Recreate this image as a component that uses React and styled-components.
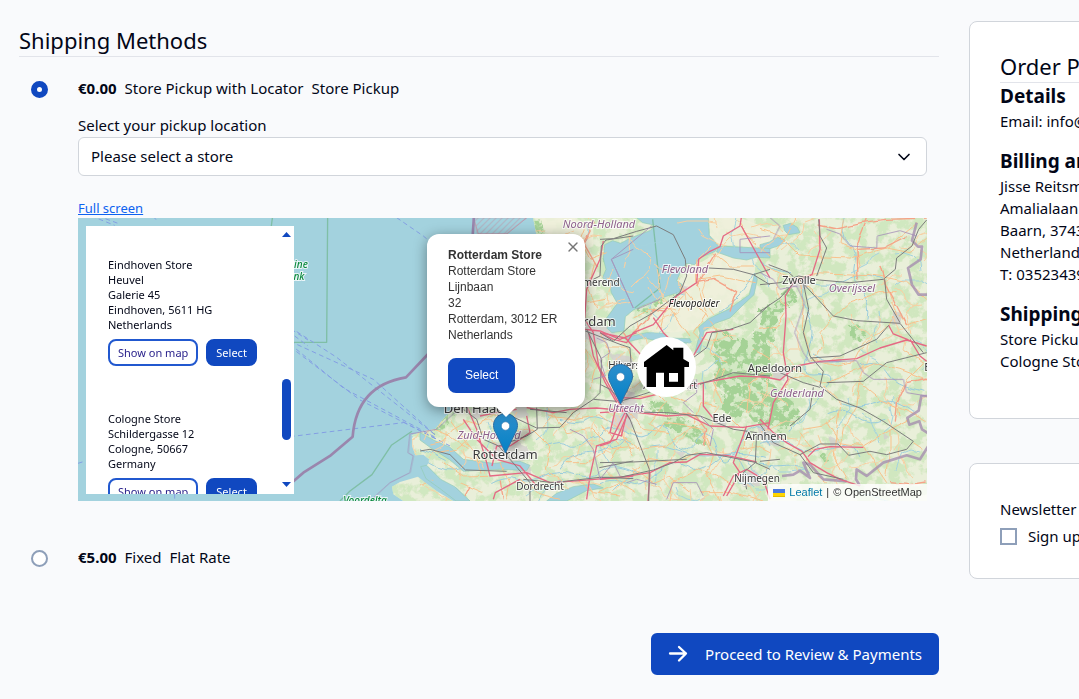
import React from 'react';
import styled, { createGlobalStyle, css } from 'styled-components';
import { ChevronDown, X } from 'lucide-react';

const GlobalStyle = createGlobalStyle`
  *, *::before, *::after {
    box-sizing: border-box;
  }

  body {
    margin: 0;
    background: #f9fafc;
    color: #020617;
    font: 15px/23px 'Noto Sans', sans-serif;
  }

  h1, h2, h3, p {
    margin: 0;
  }

  button, select {
    font: inherit;
  }
`;

const Viewport = styled.div`
  overflow: hidden;
`;

const Page = styled.div`
  display: grid;
  grid-template-columns: 2fr 1fr;
  align-items: start;
  gap: 30px;
  min-width: 1448px;
  padding: 21px 19px 24px;
`;

const Main = styled.main`
  padding-top: 5px;
`;

const SectionTitle = styled.h2`
  padding-bottom: 2px;
  border-bottom: 1px solid #e2e4ea;
  font-size: 22px;
  font-weight: 400;
  line-height: 28px;
`;

const Method = styled.div`
  display: grid;
  grid-template-columns: 17px minmax(0, 1fr);
  column-gap: 30px;
  padding: 0 12px;
  margin-top: ${({ $gap }) => $gap}px;
`;

const Radio = styled.input.attrs({ type: 'radio', name: 'shipping' })`
  appearance: none;
  width: 17px;
  height: 17px;
  margin: 4px 0 0;
  border: 2px solid #8e9fb9;
  border-radius: 50%;
  background: #fff;

  &:checked {
    border: 6px solid #1048c0;
  }
`;

const MethodLabel = styled.label`
  display: flex;
  gap: 8px;
`;

const FieldLabel = styled.label`
  display: block;
  margin-top: 14px;
`;

const SelectWrap = styled.div`
  display: grid;
  align-items: center;

  > * {
    grid-area: 1 / 1;
  }

  svg {
    justify-self: end;
    margin-right: 13px;
    pointer-events: none;
  }
`;

const StoreSelect = styled.select`
  appearance: none;
  width: 100%;
  height: 39px;
  padding: 0 12px;
  border: 1px solid #d1d5db;
  border-radius: 6px;
  background: #fff;
  color: #020617;
`;

const FullScreen = styled.a`
  display: block;
  width: fit-content;
  margin-top: 22px;
  color: #0d62f0;
  font-size: 13px;
  line-height: 20px;
`;

const MapBox = styled.div`
  position: relative;
  height: 283px;
  overflow: hidden;
  background: #a3d2de;
`;

const MapArt = styled.svg`
  display: block;
  width: 100%;
  height: 100%;
`;

const StoreList = styled.div`
  position: absolute;
  top: 8px;
  left: 8px;
  display: flex;
  justify-content: space-between;
  width: 208px;
  height: 268px;
  padding: 0 3px 0 22px;
  overflow: hidden;
  background: #fff;
  font-size: 11px;
  line-height: 15px;
`;

const Stores = styled.div`
  display: grid;
  align-content: start;
  gap: 45px;
  padding-top: 31px;
`;

const StoreActions = styled.div`
  display: flex;
  gap: 8px;
  margin-top: 7px;
`;

const Button = styled.button`
  border: 2px solid #1048c0;
  border-radius: 8px;
  background: #1048c0;
  color: #fff;
  padding: 0 8px;

  ${({ $kind }) => $kind === 'outline' && css`
    border-color: #2158cf;
    background: #fff;
    color: #241c88;
  `}

  ${({ $size }) => $size === 'small' && css`
    height: 27px;
  `}

  ${({ $size }) => $size === 'medium' && css`
    height: 35px;
    margin-top: 15px;
    padding: 0 15px 2px;
  `}

  ${({ $size }) => $size === 'large' && css`
    display: flex;
    align-items: center;
    gap: 17px;
    height: 42px;
    margin: 64px 0 0 auto;
    padding: 0 15px;
    border-radius: 6px;
  `}
`;

const Scroller = styled.div`
  display: flex;
  flex-direction: column;
  align-items: center;
  width: 9px;
  padding: 6px 0;
`;

const ScrollThumb = styled.div`
  width: 9px;
  height: 61px;
  margin: 142px 0 42px;
  border-radius: 5px;
  background: #1048c0;
`;

const Pin = styled.svg`
  position: absolute;
  left: ${({ $x }) => $x}px;
  top: ${({ $y }) => $y}px;
  width: 54px;
  height: 41px;
`;

const HomePin = styled.div`
  position: absolute;
  left: 559px;
  top: 119px;
  width: 59px;
  height: 60px;
  border-radius: 50%;
  background: #fff;
`;

const Popup = styled.div`
  position: absolute;
  left: 349px;
  top: 16px;
  width: 158px;
  padding: 13px 21px 14px;
  border-radius: 12px;
  background: #fff;
  color: #333;
  box-shadow: 0 3px 14px rgba(0, 0, 0, 0.4);
  font: 12px/16px 'Liberation Sans', Arial, sans-serif;
  white-space: nowrap;

  &::after {
    content: '';
    position: absolute;
    top: 100%;
    left: 69px;
    border: 10px solid transparent;
    border-top-color: #fff;
    border-bottom: 0;
  }
`;

const PopupClose = styled.button`
  position: absolute;
  top: 4px;
  right: 4px;
  display: grid;
  place-items: center;
  width: 16px;
  height: 18px;
  padding: 0;
  border: 0;
  background: none;
  color: #757575;
`;

const Attribution = styled.div`
  position: absolute;
  right: 0;
  bottom: 0;
  display: flex;
  align-items: center;
  gap: 4px;
  height: 17px;
  padding: 0 5px;
  background: rgba(255, 255, 255, 0.8);
  color: #333;
  font: 11px/17px 'Liberation Sans', Arial, sans-serif;

  a {
    color: #0078a8;
    text-decoration: none;
  }
`;

const Card = styled.section`
  padding: 30px;
  border: 1px solid #d1d5db;
  border-radius: 8px;
  background: #fff;

  & + & {
    margin-top: 44px;
  }
`;

const Block = styled.div`
  margin-bottom: 16px;
  line-height: 22px;
`;

const BlockTitle = styled.h3`
  font-size: 19px;
  font-weight: 700;
  line-height: 27px;
`;

const NewsletterTitle = styled.h3`
  padding: 4px 0;
  font-size: 15px;
  font-weight: 400;
`;

const CheckLabel = styled.label`
  display: flex;
  align-items: center;
  gap: 11px;
`;

const Checkbox = styled.input.attrs({ type: 'checkbox' })`
  appearance: none;
  width: 17px;
  height: 17px;
  margin: 0;
  border: 2px solid #8e9fb9;
  background: #fff;
`;

// Geometry is kept in tiles at three units per pixel; x is the left edge of a tile.
const tile = (x) => `translate(${x - 78} -2) scale(0.3333)`;

const LAND = [
  [420, 'M338 0 L350 60 L330 200 L250 400 L150 540 L110 575 L78 600 L45 640 L10 645 L-25 658 L-10 675 L30 690 L50 710 L25 735 L60 780 L110 810 L150 850 L200 865 L1600 865 L1600 0z'],
  [290, 'M366 665 L378 656 L400 664 L440 680 L500 704 L560 735 L660 740 L660 855 L640 855 L590 850 L540 825 L490 800 L440 770 L430 740 L400 716 L376 718 L366 690z'],
  [290, 'M405 755 L430 722 L460 714 L520 745 L570 790 L620 855 L540 855 L500 815 L470 805 L420 792z'],
  [290, 'M306 812 L330 798 L384 782 L400 796 L440 825 L490 855 L340 855 L310 835z'],
];

const WATER = [
  [600, 'M110 5 L325 5 L328 58 L354 88 L346 106 L300 125 L284 146 L258 142 L240 170 L230 195 L246 205 L238 228 L190 244 L130 268 L100 282 L76 302 L72 345 L36 350 L20 336 L42 322 L20 306 L52 262 L34 230 L30 210 L8 184 L18 160 L10 128 L14 86 L38 74 L62 82 L92 66 L150 44 L166 28 L128 20z'],
  [600, 'M356 90 L510 98 L510 126 L468 124 L440 132 L400 126 L350 108z'],
  [760, 'M0 86 L28 78 L52 64 L76 72 L60 88 L30 98 L0 94z'],
  [760, 'M70 28 L92 22 L112 34 L120 50 L86 56 L74 44z'],
  [600, 'M464 172 L472 190 L462 236 L424 272 L390 306 L346 322 L312 346 L300 408 L284 412 L300 352 L296 334 L326 308 L386 280 L448 236z'],
  [600, 'M70 366 L140 350 L190 352 L206 366 L270 368 L272 380 L200 380 L130 366 L90 376z'],
  [420, 'M0 650 L40 672 L90 694 L130 730 L220 742 L300 736 L330 748 L320 764 L240 760 L130 766 L90 732 L30 694 L0 672z'],
  [420, 'M380 855 L410 832 L460 812 L520 804 L550 816 L500 824 L440 855z'],
  [420, 'M2 752 L20 748 L62 790 L104 812 L150 855 L108 855 L60 818 L18 788z'],
];

const FARM = [
  [600, 'M328 5 L420 5 L510 40 L510 92 L360 88 L330 56z'],
  [600, 'M284 150 L350 112 L468 132 L462 190 L446 230 L384 274 L320 306 L280 342 L210 350 L130 340 L160 270 L236 232 L256 200 L264 160z'],
  [420, 'M340 5 L460 5 L520 30 L520 90 L460 120 L390 60z'],
];

const FOREST = [
  [600, 'M340 350 L386 346 L400 372 L436 372 L470 340 L510 318 L510 480 L482 510 L510 560 L510 622 L456 612 L440 590 L388 598 L350 572 L376 530 L340 504 L356 458 L332 428 L346 390z'],
  [760, 'M0 286 L40 262 L92 212 L108 236 L96 266 L70 276 L52 296 L40 330 L44 370 L22 392 L30 440 L0 446z'],
  [760, 'M0 490 L40 504 L70 536 L104 560 L120 590 L110 622 L70 642 L40 640 L0 632z'],
  [600, 'M190 612 L236 596 L284 628 L306 646 L314 680 L286 680 L244 652 L204 642z'],
  [600, 'M140 560 L180 556 L222 572 L224 588 L186 586 L148 582z'],
  [600, 'M120 262 L236 232 L240 244 L180 262 L144 292 L110 290z'],
  [760, 'M270 330 L310 332 L322 352 L304 378 L274 370z M176 718 L202 714 L210 730 L188 738z'],
  [420, 'M342 14 L352 56 L332 140 L366 60 L360 10z M556 78 L574 72 L570 120 L552 148z'],
  [420, 'M84 590 L102 580 L74 640 L20 646z'],
];

const URBAN = [
  [420, 'M150 576 L176 574 L190 602 L160 612z M214 680 L276 672 L320 690 L330 720 L290 742 L220 728z M270 742 L330 752 L338 776 L300 780z M490 325 L560 330 L590 360 L540 380 L500 372z M590 520 L650 530 L650 606 L606 604z M566 415 L630 420 L650 450 L600 464z M256 560 L320 566 L330 600 L290 604z'],
  [600, 'M40 596 L88 600 L96 634 L60 650 L36 628z M230 205 L262 212 L256 236 L236 228z M250 484 L290 490 L296 520 L262 524z M340 596 L378 606 L376 632 L346 628z M470 630 L510 634 L510 670 L480 664z M410 780 L470 760 L480 810 L430 812z M220 705 L262 712 L244 726z'],
  [760, 'M100 180 L150 184 L140 220 L96 212z M40 455 L80 462 L76 496 L44 484z M396 284 L426 296 L420 330 L396 326z M370 648 L384 662 L372 672z M206 660 L240 676 L228 698 L208 690z M0 636 L44 650 L60 690 L14 684z'],
];

const STREAMS = [
  [420, 'M214 800 q40 -24 80 -10 t80 -8 t90 -6 t80 -12 t110 8 M380 690 q40 -20 60 -2 t60 -14 t60 4 t60 -16 M420 760 q30 -50 80 -50 t70 -30 t60 0 M20 736 q60 40 110 20 M0 700 q40 10 80 34 M420 610 q60 20 80 0 t80 10 M350 860 q30 -60 80 -70'],
  [600, 'M0 660 q30 -40 80 -10 t80 -8 t60 26 t70 8 t60 28 t70 -20 t90 6 M0 800 q40 -20 80 0 t90 -30 t90 -20 t90 -16 t80 20 t80 -10 M128 700 q50 -20 100 0 t80 20 t80 -6 t110 10 M460 172 q-24 70 -100 120'],
  [760, 'M148 200 q60 20 110 -10 t110 0 M128 206 q0 60 20 100 t-8 110 t40 60 t-20 90 t-70 80 M0 682 q60 -20 110 10 t80 0 M0 744 q40 10 80 4 t70 20 M170 690 q30 20 70 0 t60 30 M254 0 q-20 50 10 80 t20 60 t20 80 t20 90 M206 590 q40 -20 80 10 t90 10 M240 560 q60 20 110 0 t110 30 M300 446 q60 -20 80 20 t110 60 M0 140 q60 30 90 30 M156 414 q60 40 100 16'],
];

const SECONDARY = [
  [420, 'M34 690 L70 680 L96 640 L140 614 L180 626 L220 596 L270 610 M46 710 L110 700 L160 660 L190 650 L230 690 M30 636 L90 660 L150 700 M90 610 L126 660 L170 716 L180 770 M240 740 L270 800 L260 850 M300 790 L350 830 L420 850 M340 640 L390 690 L376 760 L430 800 M400 590 L440 650 L520 640 L560 680 M440 740 L500 740 L560 700 L640 690 M380 600 L470 610 L540 596 L600 640 L640 720 M500 20 L480 70 L510 130 L560 110 M524 140 L506 220 L530 280 M500 260 L560 250 M540 350 L570 400 L560 450 L620 500 M500 400 L530 450 L510 520 M560 390 L620 390 L640 430 M470 790 L520 830 L600 840 M560 760 L600 800 L650 830 M350 540 L400 600 L370 630 M70 740 L130 780 L210 778 M120 800 L190 830 M0 810 L40 790'],
  [600, 'M100 310 L150 280 L210 280 L270 360 M240 206 L310 290 L350 345 M290 130 L290 200 L318 290 L280 350 L300 370 M290 190 L360 180 L470 200 M340 110 L390 150 L460 150 M410 10 L440 60 L510 120 M180 340 L190 300 L250 240 M370 560 L340 500 L360 460 M382 440 L330 410 L350 350 M440 590 L450 500 L510 460 M140 500 L200 560 L150 620 L180 650 M160 660 L190 620 L310 640 L330 690 M10 630 L60 690 L30 740 M70 660 L120 700 L200 690 L260 640 L310 620 M90 590 L130 640 L210 650 M100 760 L160 800 L210 780 L270 830 M210 855 L220 800 L290 760 L350 780 L400 810 M310 660 L340 720 L320 780 L360 855 M140 730 L230 740 L290 710 M0 830 L80 790 L150 730 M420 700 L470 690 L510 710 M280 620 L300 560 L350 570 M120 540 L190 530 L260 560 M460 400 L510 430 M300 830 L400 830 L490 855 M390 600 L430 640 L430 700'],
  [760, 'M0 40 L60 60 L120 120 L270 126 L380 96 L450 110 L500 70 M20 150 L90 188 L160 170 L330 176 L440 196 L500 250 M116 190 L132 260 L124 330 L150 410 M140 210 L190 250 L214 310 L180 350 L190 390 L160 420 M214 310 L270 260 L360 230 L410 230 M290 100 L300 150 L280 180 M360 150 L380 210 L410 300 M386 96 L420 60 L470 20 M110 0 L80 60 L50 100 M150 430 L230 450 L280 440 L300 400 L380 330 L400 300 M100 460 L190 500 L270 470 L340 440 L420 460 L500 490 M190 510 L240 560 L230 640 L220 720 L260 790 M300 500 L290 570 L250 640 L240 690 M300 500 L360 550 L430 580 L500 620 M200 620 L240 680 L310 690 L390 640 L450 610 M310 690 L340 740 L380 800 M390 640 L390 700 L380 780 M130 640 L190 630 L230 600 M60 550 L90 490 L150 480 M0 340 L50 330 L76 290 M140 720 L170 780 L200 800 M120 650 L160 700 L100 720 M460 680 L490 700 M420 300 L440 330 L500 310 M250 10 L240 80 L290 100 M430 400 L490 440 L440 490 L410 550 L420 600'],
];

const MINOR_RED = [
  [600, 'M100 350 L140 310 L160 282 L200 290 M290 200 L340 190 L410 230 L390 290 M350 110 L290 210 M240 590 L290 600 L320 640 L310 690'],
  [760, 'M170 24 L230 36 L300 20 L380 10 L500 6 M320 5 L290 80 L294 180 L300 190 M292 100 L370 96 L440 60 M360 150 L378 210 L440 330 M390 800 L450 806 L500 798 M406 620 L412 560 L440 500 L500 486'],
  [420, 'M520 20 L490 80 L530 150 M610 350 L640 390 M250 850 L240 790 M130 850 L150 810'],
];

const MOTORWAY = [
  [420, 'M550 75 L540 130 L500 220 L494 310 L520 350 L536 450 L590 550 L630 610 M494 340 L540 345 L600 370 L650 350 M140 570 L170 640 L200 740 L210 780 L320 770 L390 800 L480 794 L640 780 M180 600 L230 590 L290 580 M320 575 L400 590 L450 580 L530 576 L640 586 M320 600 L330 650 L270 690 L230 690 L216 750 M500 850 L510 780 L530 690 L590 670 L620 600 M130 610 L170 670 L230 730 L300 750 L350 810 M220 850 L226 830 L300 790 M506 350 L520 420 L556 500 L590 560'],
  [600, 'M0 350 L40 370 L80 380 L100 350 L160 326 L230 240 L290 200 L296 130 L330 106 L360 92 L370 60 L420 30 L424 5 M424 30 L510 186 M160 305 L190 350 L210 370 M0 350 L76 366 L126 420 M0 590 L80 585 L200 600 L260 596 L330 630 L430 634 L510 620 M76 588 L30 680 L0 690 M80 595 L64 660 L30 650 L44 590 L60 560 M64 545 L120 548 L190 530 L310 500 L420 480 L510 484 M310 500 L310 570 L350 620 M280 420 L320 350 L400 340 M0 790 L60 784 L150 770 L210 740 L260 738 L300 715 L380 718 L470 738 M380 840 L420 770 L400 740 L440 630 M150 770 L144 855 M370 840 L400 780 L440 760 L490 790 L510 850'],
  [760, 'M178 10 L180 100 L156 176 L100 200 L76 240 L78 300 L70 410 L84 490 L40 560 L24 640 M0 480 L60 492 L110 450 L180 436 L290 428 L360 396 L440 372 L500 390 M450 370 L480 420 L500 436 M386 328 L400 354 L446 372 M0 610 L40 650 L80 680 L126 706 L150 740 L200 770 L240 790 L300 810 M144 722 L166 700 L210 692 L310 694'],
];

const RAIL = [
  [420, 'M640 60 L558 72 L544 90 L540 180 L520 190 M500 340 L545 430 L540 530 L520 550 L590 556 M496 345 L600 385 L630 395 L636 480 L620 530 M130 580 L170 610 L190 670 L236 690 M220 575 L350 636 L420 634 L460 590 L520 550 M350 575 L352 640 M236 690 L330 800 L330 855 M236 690 L320 660 L352 640 M0 705 L30 700 L90 716 L136 762 L260 766 M310 790 L400 800 L540 784 L640 788 M640 480 L600 550 M538 755 L640 735 M440 590 L330 580'],
  [600, 'M0 70 L40 68 L110 46 L170 30 L220 56 L256 130 L260 180 L240 230 L160 290 L90 330 L40 376 L0 350 M326 156 L400 160 L460 176 L510 160 M460 176 L510 206 M510 265 L450 320 L390 340 L336 350 L320 395 L260 440 M60 556 L130 535 L260 490 M60 560 L90 610 L148 760 L146 855 M70 560 L30 520 L0 505 M82 588 L200 590 L300 600 L400 640 L470 650 M0 784 L60 784 L160 762 L220 740 L260 718 L320 710 L470 740 M0 740 L100 738 L260 730 M300 505 L400 470 L510 480 M470 650 L466 740 L430 770 L440 820 M466 740 L510 760'],
  [760, 'M0 206 L60 200 L116 180 L178 192 L270 200 L370 190 L406 160 L410 126 L456 90 L476 40 L500 12 M26 146 L84 168 L100 182 M118 190 L220 300 L290 314 L420 322 L490 410 M0 286 L60 246 L104 198 M130 200 L146 280 L130 350 L150 420 L190 466 L180 510 L230 550 L300 576 L370 616 L460 676 L440 700 L380 716 L330 706 L266 718 L234 684 L180 684 L120 716 M150 426 L240 420 L350 370 L386 328 M500 410 L380 440 L310 496 L200 500 M176 10 L180 60 L200 96 L170 180 M374 190 L380 250 L420 320 M60 470 L130 500 L180 514 M0 625 L40 680 L120 716 L160 770 L250 790 M160 514 L150 580 L90 630 M0 736 L60 730'],
];

const BORDER = [
  [290, 'M0 805 L40 770 L120 720 L188 662 C196 560 250 500 348 484 L420 408 L520 220 L548 60 L552 0'],
];

const BORDER_EAST = [
  [760, 'M470 20 L456 74 L474 92 L486 92 L482 130 L444 156 L456 206 L476 236 L505 236 M505 540 L484 540 L476 584 L442 606 L448 626 L478 616 L486 640 L505 652 M505 690 L480 730 L440 718 L370 740 L320 780 L290 760 L288 790 L300 810 M66 780 L100 776 L120 764 L150 786 L130 740 L150 746 L190 790 L260 796'],
];

const PROVINCE = [
  [420, 'M530 366 L560 380 L570 410 L540 430 L556 480 L520 490 M450 640 L490 660 L520 700 L540 790 L580 740 L600 780 M640 100 L574 130 L640 276'],
  [600, 'M155 30 L34 130 L100 276 M110 280 L180 250 M280 590 L250 560 L290 530 L290 490 M80 800 L110 790 L170 805 M330 690 L340 640 L300 600 M510 60 L420 70 L420 110 L510 110 M200 850 L220 800 L290 800 L310 840'],
  [760, 'M30 5 L60 30 L40 70 M200 40 L240 54 L270 90 L350 96 L352 60 L420 44 L470 60 M0 170 L40 190 L60 220 L110 210 L134 260 L104 350 L130 410 L150 440 L290 434 L310 470 L340 490 L430 490 L440 530 L500 540'],
  [290, 'M510 575 L440 640 L360 654 L354 710 L370 720 L360 770 L300 800 L240 855'],
];

const FERRY = [
  [290, 'M0 334 L140 424 L440 660 M0 376 L250 490 L430 652 M0 384 L160 516 L436 664 M0 392 L210 552 L440 670 M0 662 L340 620 M320 5 L400 60 L460 110 M340 618 L480 690'],
  [78, 'M60 0 L120 22 M40 0 L110 28 M225 0 L240 18 M640 340 L690 372 M650 360 L690 390 M0 742 L20 736 M290 810 L290 855'],
];

const RESERVE = [
  [290, 'M113 0 L110 379 L0 379 M150 855 L180 825 L246 776 L304 688 L366 646'],
  [78, 'M584 0 L580 30'],
  [600, 'M158 10 L180 216 L104 276'],
];

const DANGER = [
  [420, 'M160 5 L174 54 L260 54 L320 5z'],
];

const LABELS = [
  ['Noord-Holland', 599, 228, 'area', 11],
  ['Flevoland', 685, 273, 'area', 11],
  ['Overijssel', 852, 292, 'area', 11],
  ['Gelderland', 797, 397, 'area', 11],
  ['Zuid-Holland', 489, 439, 'area', 11],
  ['Utrecht', 626, 412, 'area', 11],
  ['Flevopolder', 694, 307, 'polder', 10],
  ['Purmerend', 593, 286, 'town', 10],
  ['Zwolle', 799, 284, 'town', 11],
  ['Apeldoorn', 775, 372, 'town', 11],
  ['Hilversum', 632, 369, 'town', 10],
  ['Amersfoort', 670, 389, 'town', 10],
  ['Ede', 722, 422, 'town', 11],
  ['Arnhem', 766, 440, 'town', 11],
  ['Nijmegen', 757, 482, 'town', 10],
  ['Dordrecht', 540, 490, 'town', 10],
  ['Enschede', 949, 371, 'town', 11],
  ['Amsterdam', 580, 326, 'town', 13],
  ['Den Haag', 474, 413, 'town', 13],
  ['Rotterdam', 505, 459, 'town', 13],
  ['Bruine', 293, 268, 'nature', 10],
  ['Bank', 293, 280, 'nature', 10],
  ['Voordelta', 365, 504, 'nature', 10],
];

const LABEL_FILL = { area: '#8d618b', polder: '#222', town: '#3b3b3b', nature: '#0c8a3e' };

// Country lanes: short bent strokes from a small fixed-seed generator.
const lanes = (count, seed) => {
  let s = seed;
  const next = () => {
    s = (s * 16807) % 2147483647;
    return s / 2147483647;
  };
  return Array.from({ length: count }, () => {
    let d = `M${Math.round(340 + next() * 509)} ${Math.round(next() * 283)}`;
    let angle = next() * 6;
    for (let i = 0; i < 4; i += 1) {
      angle += (next() - 0.5) * 1.6;
      d += ` l${Math.round(Math.cos(angle) * 9)} ${Math.round(Math.sin(angle) * 9)}`;
    }
    return d;
  }).join(' ');
};

const LANES = lanes(150, 41);
const BROOKS = lanes(50, 977);

function Shapes({ items, ...rest }) {
  return (
    <g strokeLinejoin="round" {...rest}>
      {items.map(([x, d]) => (
        <path key={d} d={d} transform={tile(x)} />
      ))}
    </g>
  );
}

function MapCanvas() {
  return (
    <MapArt viewBox="0 0 849 283" preserveAspectRatio="xMinYMin slice" aria-hidden="true">
      <defs>
        <clipPath id="land">
          {LAND.map(([x, d]) => (
            <path key={d} d={d} transform={tile(x)} />
          ))}
        </clipPath>
        <filter id="fields" x="0" y="0" width="100%" height="100%" colorInterpolationFilters="sRGB">
          <feTurbulence type="fractalNoise" baseFrequency="0.09" numOctaves="5" seed="8" />
          <feColorMatrix values="0 0 0 0 0.77  0 0 0 0 0.89  0 0 0 0 0.70  7 0 0 0 -3" />
        </filter>
        <filter id="woods" x="0" y="0" width="100%" height="100%" colorInterpolationFilters="sRGB">
          <feTurbulence type="fractalNoise" baseFrequency="0.13" numOctaves="4" seed="3" result="n" />
          <feDisplacementMap in="SourceGraphic" in2="n" scale="16" result="shape" />
          <feColorMatrix in="n" values="0 0 0 0 0  0 0 0 0 0  0 0 0 0 0  0 9 0 0 -3.6" result="holes" />
          <feComposite in="shape" in2="holes" operator="in" />
        </filter>
        <filter id="bend" x="0" y="0" width="100%" height="100%">
          <feTurbulence type="fractalNoise" baseFrequency="0.06" numOctaves="2" seed="5" result="n" />
          <feDisplacementMap in="SourceGraphic" in2="n" scale="6" xChannelSelector="R" yChannelSelector="G" />
        </filter>
        <pattern id="hatch" width="18" height="18" patternUnits="userSpaceOnUse">
          <path d="M0 18 L18 0" stroke="#c58ea2" strokeWidth="2" />
        </pattern>
      </defs>
      <Shapes items={LAND} fill="#e9efd9" />
      <g clipPath="url(#land)">
        <rect width="849" height="283" filter="url(#fields)" opacity="0.65" />
        <Shapes items={FARM} fill="#f0f0dc" opacity="0.85" />
        <Shapes items={FOREST} fill="#d3e8c4" opacity="0.7" />
        <g filter="url(#woods)">
          <Shapes items={FOREST} fill="#a5d296" />
        </g>
        <Shapes items={URBAN} fill="#d3cfcd" opacity="0.8" filter="url(#bend)" />
      </g>
      <Shapes items={WATER} fill="#a3d2de" stroke="#93cbb4" strokeWidth="2" />
      <Shapes items={RESERVE} fill="none" stroke="#7fbfa6" strokeWidth="4" />
      <Shapes items={DANGER} fill="url(#hatch)" stroke="#c58ea2" strokeWidth="3" />
      <Shapes items={FERRY} fill="none" stroke="#849fe3" strokeWidth="3" strokeDasharray="14 10" />
      <Shapes items={BORDER} fill="none" stroke="#9a86ad" strokeWidth="8" />
      <g clipPath="url(#land)">
        <g filter="url(#bend)" fill="none" strokeLinejoin="round">
          <path d={BROOKS} stroke="#a5d3de" />
          <path d={LANES} stroke="#f8cfa2" />
          <Shapes items={STREAMS} stroke="#9accdc" strokeWidth="3" />
          <Shapes items={SECONDARY} stroke="#f8c28c" strokeWidth="3" />
          <Shapes items={MINOR_RED} stroke="#f5a287" strokeWidth="4" />
        </g>
        <Shapes items={BORDER_EAST} fill="none" stroke="#a68fb0" strokeWidth="8" opacity="0.8" />
        <Shapes items={MOTORWAY} fill="none" stroke="#e56984" strokeWidth="4" />
        <Shapes items={RAIL} fill="none" stroke="#7c7c7c" strokeWidth="3" />
      </g>
      <Shapes items={PROVINCE} fill="none" stroke="#a48db8" strokeWidth="3" opacity="0.8" />
      <g textAnchor="middle" fontFamily="'Noto Sans', sans-serif" paintOrder="stroke" stroke="#fff" strokeOpacity="0.75" strokeWidth="2">
        {LABELS.map(([name, x, y, kind, size]) => (
          <text
            key={name}
            x={x - 78}
            y={y - 218}
            fontSize={size}
            fontStyle={kind === 'town' ? 'normal' : 'italic'}
            fontWeight={kind === 'nature' ? 500 : 400}
            fill={LABEL_FILL[kind]}
          >
            {name}
          </text>
        ))}
      </g>
    </MapArt>
  );
}

function StorePin({ x, y }) {
  return (
    <Pin $x={x} $y={y} viewBox="0 0 54 41" aria-hidden="true">
      <defs>
        <linearGradient id="pin" x1="0" y1="0" x2="0" y2="1">
          <stop offset="0" stopColor="#2d8fcc" />
          <stop offset="1" stopColor="#0481c6" />
        </linearGradient>
        <filter id="pinShade" x="-20%" y="-20%" width="140%" height="140%">
          <feGaussianBlur stdDeviation="2" />
        </filter>
      </defs>
      <path d="M13 40 L22 22 Q32 12 38 17 Q40 23 30 29z" fill="#000" opacity="0.25" filter="url(#pinShade)" />
      <path
        d="M12.5 .5C5.9 .5 .5 5.9 .5 12.5c0 2.7 .9 5 2.2 7.3L12.5 40l9.8-20.2c1.3-2.3 2.2-4.6 2.2-7.3C24.5 5.900 19.1 .5 12.5 .5z"
        fill="url(#pin)"
        stroke="#2e6fa5"
      />
      <circle cx="12.5" cy="13" r="4.2" fill="#fff" stroke="#2e74ab" strokeWidth="0.6" />
    </Pin>
  );
}

const STORES = [
  { name: 'Eindhoven Store', lines: ['Heuvel', 'Galerie 45', 'Eindhoven, 5611 HG', 'Netherlands'] },
  { name: 'Cologne Store', lines: ['Schildergasse 12', 'Cologne, 50667', 'Germany'] },
];

function StoreItem({ store }) {
  return (
    <div>
      <p>{store.name}</p>
      {store.lines.map((line) => (
        <p key={line}>{line}</p>
      ))}
      <StoreActions>
        <Button type="button" $kind="outline" $size="small">Show on map</Button>
        <Button type="button" $size="small">Select</Button>
      </StoreActions>
    </div>
  );
}

function StoreMap() {
  return (
    <MapBox>
      <MapCanvas />
      <StorePin x={415} y={195} />
      <StorePin x={530} y={146} />
      <HomePin>
        <svg viewBox="111 363 177 180" width="59" height="60" aria-hidden="true">
          <path
            fillRule="evenodd"
            d="M132 453v-15l68-51 20 16v-8h30v34l17 10v14h-14v60h-61v-43h-24v43h-28v-60zM207 471v26h27v-26z"
          />
        </svg>
      </HomePin>
      <StoreList>
        <Stores>
          {STORES.map((store) => (
            <StoreItem key={store.name} store={store} />
          ))}
        </Stores>
        <Scroller>
          <svg width="9" height="5" viewBox="0 0 9 5" aria-hidden="true">
            <path d="M0 5 L4.5 0 L9 5z" fill="#1048c0" />
          </svg>
          <ScrollThumb />
          <svg width="9" height="5" viewBox="0 0 9 5" aria-hidden="true">
            <path d="M0 0 L9 0 L4.5 5z" fill="#1048c0" />
          </svg>
        </Scroller>
      </StoreList>
      <Popup>
        <strong>Rotterdam Store</strong>
        <p>Rotterdam Store</p>
        <p>Lijnbaan</p>
        <p>32</p>
        <p>Rotterdam, 3012 ER</p>
        <p>Netherlands</p>
        <Button type="button" $size="medium">Select</Button>
        <PopupClose type="button" aria-label="Close popup">
          <X size={16} strokeWidth={2} />
        </PopupClose>
      </Popup>
      <Attribution>
        <svg width="12" height="8" viewBox="0 0 12 8" aria-hidden="true">
          <path fill="#4C7BE1" d="M0 0h12v4H0z" />
          <path fill="#FFD500" d="M0 4h12v3H0z" />
          <path fill="#E0BC00" d="M0 7h12v1H0z" />
        </svg>
        <a href="#leaflet">Leaflet</a>
        <span>|</span>
        <span>© OpenStreetMap</span>
      </Attribution>
    </MapBox>
  );
}

const SUMMARY = [
  { title: 'Details', lines: ['Email: info@example.com'] },
  {
    title: 'Billing and Shipping Address',
    lines: ['Jisse Reitsma', 'Amalialaan 126', 'Baarn, 3743 KJ', 'Netherlands', 'T: 0352343984'],
  },
  { title: 'Shipping Method', lines: ['Store Pickup', 'Cologne Store'] },
];

function App() {
  return (
    <Viewport>
      <GlobalStyle />
      <Page>
        <Main>
          <SectionTitle>Shipping Methods</SectionTitle>
          <Method $gap={20}>
            <Radio id="pickup" defaultChecked />
            <div>
              <MethodLabel htmlFor="pickup">
                <strong>€0.00</strong>
                <span>Store Pickup with Locator</span>
                <span>Store Pickup</span>
              </MethodLabel>
              <FieldLabel htmlFor="store">Select your pickup location</FieldLabel>
              <SelectWrap>
                <StoreSelect id="store" defaultValue="">
                  <option value="">Please select a store</option>
                  {STORES.map((store) => (
                    <option key={store.name}>{store.name}</option>
                  ))}
                </StoreSelect>
                <ChevronDown size={20} />
              </SelectWrap>
              <FullScreen href="#map">Full screen</FullScreen>
              <StoreMap />
            </div>
          </Method>
          <Method $gap={45}>
            <Radio id="flat" />
            <MethodLabel htmlFor="flat">
              <strong>€5.00</strong>
              <span>Fixed</span>
              <span>Flat Rate</span>
            </MethodLabel>
          </Method>
          <Button type="button" $size="large">
            <svg width="20" height="20" viewBox="0 0 20 20" fill="none" aria-hidden="true">
              <path
                d="M2 9.5h16M11 3l7 6.5-7 7"
                stroke="currentColor"
                strokeWidth="2.3"
                strokeLinecap="round"
                strokeLinejoin="round"
              />
            </svg>
            Proceed to Review &amp; Payments
          </Button>
        </Main>
        <aside>
          <Card>
            <SectionTitle>Order Preview</SectionTitle>
            {SUMMARY.map((block) => (
              <Block key={block.title}>
                <BlockTitle>{block.title}</BlockTitle>
                {block.lines.map((line) => (
                  <p key={line}>{line}</p>
                ))}
              </Block>
            ))}
          </Card>
          <Card>
            <NewsletterTitle>Newsletter</NewsletterTitle>
            <CheckLabel>
              <Checkbox />
              Sign up for our newsletter
            </CheckLabel>
          </Card>
        </aside>
      </Page>
    </Viewport>
  );
}

export default App;
